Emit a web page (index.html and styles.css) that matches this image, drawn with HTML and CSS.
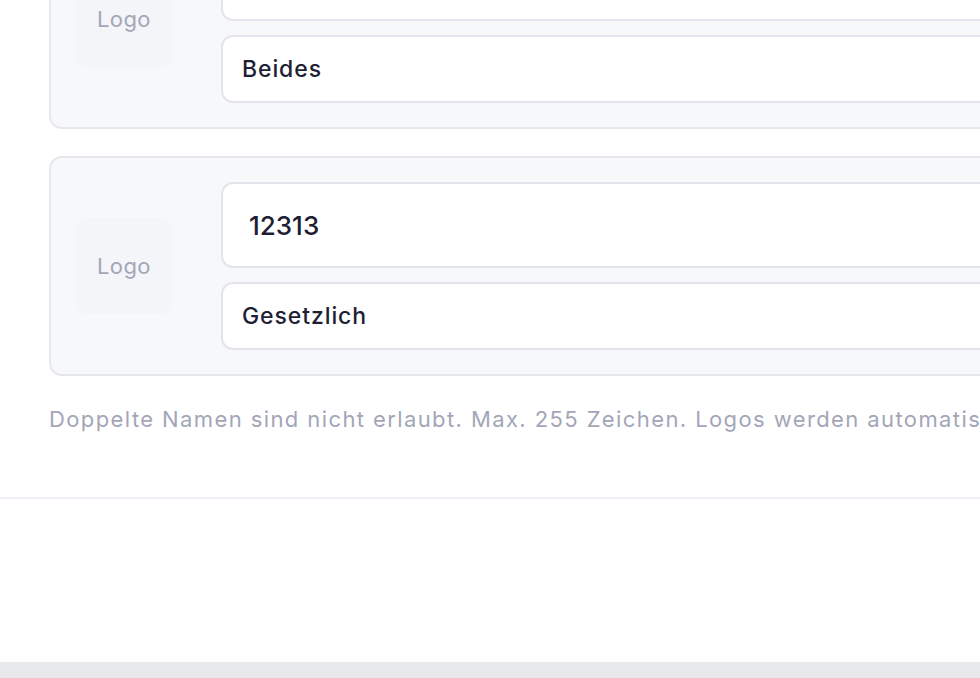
FILE: index.html
```html
<!DOCTYPE html>
<html lang="de">
<head>
<meta charset="utf-8">
<title>Logos</title>
<link rel="stylesheet" href="styles.css">
</head>
<body>
<div class="panel">
  <div class="content">
    <div class="list">
      <div class="entry">
        <div class="logo">Logo</div>
        <div class="fields">
          <div class="field field-name">Allianz</div>
          <div class="field field-type">Beides</div>
        </div>
      </div>
      <div class="entry">
        <div class="logo">Logo</div>
        <div class="fields">
          <div class="field field-name">12313</div>
          <div class="field field-type">Gesetzlich</div>
        </div>
      </div>
    </div>
    <p class="hint">Doppelte Namen sind nicht erlaubt. Max. 255 Zeichen. Logos werden automatisch skaliert und zugeschnitten.</p>
  </div>
  <div class="footer"></div>
</div>
</body>
</html>
```

FILE: styles.css
```css
html, body {
  margin: 0;
  padding: 0;
  overflow: hidden;
}

body {
  background: #e8e9ec;
  font-family: "Inter", "Noto Sans", sans-serif;
  color: #1e1e34;
  width: 980px;
  height: 678px;
}

.panel {
  background: #ffffff;
  width: 1400px;
  margin-top: -91px;
}

.content {
  padding: 0 0 63px 49px;
}

.list {
  display: flex;
  flex-direction: column;
  gap: 27px;
}

.entry {
  display: flex;
  align-items: center;
  gap: 49px;
  background: #f7f8fa;
  border: 2px solid #e6e7ec;
  border-radius: 13px;
  padding: 24px 26px 24px 25px;
}

.logo {
  width: 96px;
  height: 96px;
  flex: none;
  border-radius: 12px;
  background: #f4f5f8;
  color: #a3a6b8;
  font-size: 22px;
  letter-spacing: 0.4px;
  display: flex;
  align-items: center;
  justify-content: center;
}

.fields {
  flex: 1;
  display: flex;
  flex-direction: column;
  gap: 14px;
}

.field {
  background: #ffffff;
  border: 2px solid #e4e5ec;
  border-radius: 12px;
  display: flex;
  align-items: center;
  font-weight: 500;
  white-space: nowrap;
}

.field-name {
  height: 82px;
  padding-left: 26px;
  font-size: 26px;
}

.field-type {
  height: 64px;
  padding-left: 19px;
  font-size: 23px;
  letter-spacing: 0.9px;
}

.hint {
  margin: 28px 0 0;
  line-height: 30px;
  font-size: 22px;
  letter-spacing: 1.4px;
  color: #a3a6b8;
  white-space: nowrap;
}

.footer {
  border-top: 2px solid #efeff5;
  height: 163px;
}
```
